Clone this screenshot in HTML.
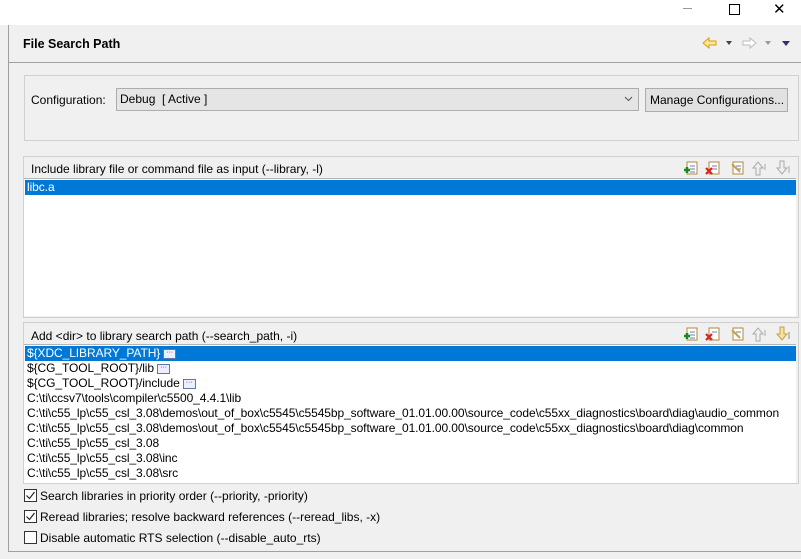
<!DOCTYPE html>
<html><head><style>
body{margin:0;width:801px;height:559px;background:#f0f0f0;font-family:"Liberation Sans",sans-serif;font-size:12px;color:#000;position:relative;overflow:hidden}
.a{position:absolute}
.top{left:0;top:0;width:801px;height:25px;background:#fff}
.frame{left:8px;top:25px;width:793px;height:526px;border-left:1px solid #a0a0a0;border-bottom:1px solid #a0a0a0}
.box{border:1px solid #d0d0d0;background:#f0f0f0}
.list{background:#fff;border:1px solid #b4b4b4}
.row{position:absolute;left:1px;right:1px;height:15px;line-height:15px;padding-left:2px;white-space:nowrap;letter-spacing:-0.08px}
.sel{background:#0078d7;color:#fff}
.dots{display:inline-block;width:11px;height:8px;border:1px solid #5a7aa8;background:#eef;vertical-align:middle;margin-left:3px;font-size:7px;line-height:6px;text-align:center;color:#335}
.cb{width:11px;height:11px;border:1px solid #333;background:#fff}
</style></head><body>
<div class="a top"></div>
<div class="a" style="left:683px;top:8px;width:9px;height:1px;background:#999"></div>
<div class="a" style="left:729px;top:4px;width:9px;height:9px;border:1px solid #000"></div>
<div class="a" style="left:773px;top:0px;font-size:15px">✕</div>
<div class="a frame"></div>
<div class="a" style="left:9px;top:62px;width:792px;height:1px;background:#a0a0a0"></div>
<div class="a" style="left:23px;top:37px;font-weight:bold;font-size:12.5px">File Search Path</div>
<svg class="a" style="left:702px;top:35px" width="95" height="16">
<path d="M1 8l6-5v3h7v4H7v3z" fill="#fbe7a0" stroke="#d9a000"/>
<path d="M24 6l3 4 3-4z" fill="#444"/>
<path d="M54 8l-6-5v3h-7v4h7v3z" fill="#fff" stroke="#bbb"/>
<path d="M63 6l3 4 3-4z" fill="#999"/>
<path d="M80 6l4 5 4-5z" fill="#3a2c6a"/>
</svg>

<div class="a box" style="left:24px;top:75px;width:773px;height:64px"></div>
<div class="a" style="left:31px;top:93px">Configuration:</div>
<div class="a" style="left:116px;top:88px;width:521px;height:21px;border:1px solid #adadad;background:#e5e5e5"></div>
<div class="a" style="left:120px;top:92px">Debug &nbsp;[ Active ]</div>
<svg class="a" style="left:624px;top:96px" width="9" height="6"><path d="M1 1l3.5 3.5L8 1" stroke="#555" fill="none"/></svg>
<div class="a" style="left:645px;top:88px;width:141px;height:22px;border:1px solid #adadad;background:#e1e1e1"></div>
<div class="a" style="left:650px;top:93px">Manage Configurations...</div>

<div class="a box" style="left:23px;top:156px;width:774px;height:160px"></div>
<div class="a" style="left:31px;top:162px">Include library file or command file as input (--library, -l)</div>
<div class="a list" style="left:24px;top:178px;width:772px;height:137px;border:none;border-top:1px solid #b4b4b4"></div>
<div class="a row sel" style="left:25px;width:769px;top:180px">libc.a</div>

<div class="a box" style="left:23px;top:322px;width:774px;height:160px"></div>
<div class="a" style="left:31px;top:329px">Add &lt;dir&gt; to library search path (--search_path, -i)</div>
<div class="a list" style="left:24px;top:344px;width:772px;height:138px;border:none;border-top:1px solid #b4b4b4"></div>
<div class="a row sel" style="left:25px;width:769px;top:346px">${XDC_LIBRARY_PATH}<span class="dots">···</span></div>
<div class="a row" style="left:25px;top:361px">${CG_TOOL_ROOT}/lib<span class="dots">···</span></div>
<div class="a row" style="left:25px;top:376px">${CG_TOOL_ROOT}/include<span class="dots">···</span></div>
<div class="a row" style="left:25px;top:391px">C:\ti\ccsv7\tools\compiler\c5500_4.4.1\lib</div>
<div class="a row" style="left:25px;top:406px">C:\ti\c55_lp\c55_csl_3.08\demos\out_of_box\c5545\c5545bp_software_01.01.00.00\source_code\c55xx_diagnostics\board\diag\audio_common</div>
<div class="a row" style="left:25px;top:421px">C:\ti\c55_lp\c55_csl_3.08\demos\out_of_box\c5545\c5545bp_software_01.01.00.00\source_code\c55xx_diagnostics\board\diag\common</div>
<div class="a row" style="left:25px;top:436px">C:\ti\c55_lp\c55_csl_3.08</div>
<div class="a row" style="left:25px;top:451px">C:\ti\c55_lp\c55_csl_3.08\inc</div>
<div class="a row" style="left:25px;top:466px">C:\ti\c55_lp\c55_csl_3.08\src</div>

<svg class="a" style="left:684px;top:160px" width="115" height="18">
<rect x="3" y="2" width="10" height="12" fill="#fff" stroke="#b08a3a"/><line x1="6" y1="6" x2="11" y2="6" stroke="#6a7fa8"/><line x1="6" y1="9" x2="11" y2="9" stroke="#6a7fa8"/><line x1="6" y1="12" x2="11" y2="12" stroke="#6a7fa8"/><path d="M0 10h6M3 7v6" stroke="#1a8a1a" stroke-width="2.5"/>
<g transform="translate(22,0)"><rect x="3" y="2" width="10" height="12" fill="#fff" stroke="#b08a3a"/><line x1="6" y1="6" x2="11" y2="6" stroke="#6a7fa8"/><line x1="6" y1="9" x2="11" y2="9" stroke="#6a7fa8"/><path d="M0 8l6 6M6 8l-6 6" stroke="#d22" stroke-width="2.2"/></g>
<g transform="translate(46,0)"><rect x="3" y="2" width="10" height="12" fill="#fff" stroke="#b08a3a"/><line x1="6" y1="6" x2="11" y2="6" stroke="#6a7fa8"/><line x1="6" y1="9" x2="11" y2="9" stroke="#6a7fa8"/><path d="M2 4l8 8" stroke="#c9a040" stroke-width="2"/></g>
<g transform="translate(68,0)" stroke="#aaa" fill="none"><path d="M4 15V8H1l5-6 5 6H8v7z"/><line x1="13" y1="4" x2="13" y2="10"/></g>
<g transform="translate(92,0)" stroke="#aaa" fill="none"><path d="M4 1v7H1l5 6 5-6H8V1z"/><line x1="13" y1="6" x2="13" y2="13"/></g>
</svg>
<svg class="a" style="left:684px;top:326px" width="115" height="18">
<rect x="3" y="2" width="10" height="12" fill="#fff" stroke="#b08a3a"/><line x1="6" y1="6" x2="11" y2="6" stroke="#6a7fa8"/><line x1="6" y1="9" x2="11" y2="9" stroke="#6a7fa8"/><line x1="6" y1="12" x2="11" y2="12" stroke="#6a7fa8"/><path d="M0 10h6M3 7v6" stroke="#1a8a1a" stroke-width="2.5"/>
<g transform="translate(22,0)"><rect x="3" y="2" width="10" height="12" fill="#fff" stroke="#b08a3a"/><line x1="6" y1="6" x2="11" y2="6" stroke="#6a7fa8"/><path d="M0 8l6 6M6 8l-6 6" stroke="#d22" stroke-width="2.2"/></g>
<g transform="translate(46,0)"><rect x="3" y="2" width="10" height="12" fill="#fff" stroke="#b08a3a"/><line x1="6" y1="6" x2="11" y2="6" stroke="#6a7fa8"/><path d="M2 4l8 8" stroke="#c9a040" stroke-width="2"/></g>
<g transform="translate(68,0)" stroke="#aaa" fill="none"><path d="M4 15V8H1l5-6 5 6H8v7z"/><line x1="13" y1="4" x2="13" y2="10"/></g>
<g transform="translate(92,0)" stroke="#c9a040" fill="#f4e2a0"><path d="M4 1v7H1l5 6 5-6H8V1z"/><line x1="13" y1="6" x2="13" y2="13" stroke="#888"/></g>
</svg>

<svg class="a" style="left:24px;top:489px" width="13" height="13"><rect x="0.5" y="0.5" width="12" height="12" fill="#fff" stroke="#333"/><path d="M2.5 6.5l3 3 5-6.5" stroke="#222" fill="none" stroke-width="1.2"/></svg>
<div class="a" style="left:40px;top:489px">Search libraries in priority order (--priority, -priority)</div>
<svg class="a" style="left:24px;top:510px" width="13" height="13"><rect x="0.5" y="0.5" width="12" height="12" fill="#fff" stroke="#333"/><path d="M2.5 6.5l3 3 5-6.5" stroke="#222" fill="none" stroke-width="1.2"/></svg>
<div class="a" style="left:40px;top:510px">Reread libraries; resolve backward references (--reread_libs, -x)</div>
<svg class="a" style="left:24px;top:531px" width="13" height="13"><rect x="0.5" y="0.5" width="12" height="12" fill="#fff" stroke="#333"/></svg>
<div class="a" style="left:40px;top:531px">Disable automatic RTS selection (--disable_auto_rts)</div>
</body></html>
